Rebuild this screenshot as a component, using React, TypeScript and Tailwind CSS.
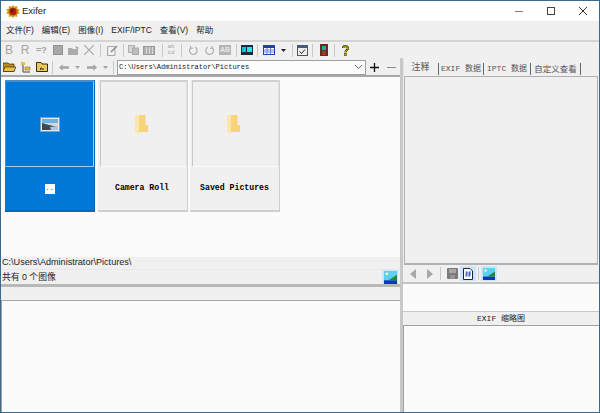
import type { ReactNode } from "react";

const cjk = "font-['Liberation_Sans','Noto_Sans_CJK_SC',sans-serif]";
const mono = "font-['Liberation_Mono','Noto_Sans_CJK_SC',monospace]";

// fixed width cell so that toolbar glyphs land on their button grid
function Slot({ w, children }: { w: string; children?: ReactNode }) {
  return <div className={`${w} shrink-0 flex items-center justify-center`}>{children}</div>;
}

function Sep() {
  return <div className="w-px h-[13px] bg-[#c8c8c8]" />;
}

function Folder() {
  return (
    <svg width="13" height="19" viewBox="0 0 13 19">
      <path d="M4 0H10.5V10H13V17H4Z" fill="#f6d477" />
      <path d="M0 0H4V19L0 17Z" fill="#fbe6ad" />
    </svg>
  );
}

function Landscape({ size = 14 }: { size?: number }) {
  return (
    <svg width={size} height={size} viewBox="0 0 14 14">
      <rect width="14" height="14" fill="#5fd0f5" />
      <circle cx="3" cy="3" r="1.5" fill="#fff3a0" />
      <path d="M0 10H14V14H0Z" fill="#1036c0" />
      <path d="M5 10L14 4V10Z" fill="#1f8a30" />
    </svg>
  );
}

function ToolbarTop() {
  return (
    <div className={`h-[16px] shrink-0 flex items-center text-[#a4a4a4] ${cjk}`}>
      <Slot w="w-[16px]"><span className="text-[12px] leading-none">B</span></Slot>
      <Slot w="w-[16px]"><span className="text-[12px] leading-none">R</span></Slot>
      <Slot w="w-[17px]"><span className="text-[9px] font-bold leading-none">=?</span></Slot>
      <Slot w="w-[15px]"><div className="w-[10px] h-[10px] bg-[#a8a8a8] border border-[#909090]" /></Slot>
      <Slot w="w-[17px]"><svg width="13" height="11" viewBox="0 0 13 11"><path d="M1 3H5L6 4H11V10H1Z" fill="#ababab" /><path d="M8 1L12 3L10 4Z" fill="#909090" /></svg></Slot>
      <Slot w="w-[14px]"><svg width="10" height="10" viewBox="0 0 10 10"><path d="M0 0L10 10M10 0L0 10" stroke="#a8a8a8" strokeWidth="1.2" /></svg></Slot>
      <Slot w="w-[8px]"><Sep /></Slot>
      <Slot w="w-[16px]"><svg width="12" height="11" viewBox="0 0 12 11"><path d="M1.5 1.5H9V10.5H1.5Z" fill="none" stroke="#a8a8a8" /><path d="M5 7L11 1" stroke="#888" strokeWidth="1.5" /></svg></Slot>
      <Slot w="w-[6px]"><Sep /></Slot>
      <Slot w="w-[15px]"><svg width="11" height="10" viewBox="0 0 11 10"><rect x="0.5" y="0.5" width="6" height="7" fill="#d4d4d4" stroke="#b0b0b0" /><rect x="4.5" y="3" width="6" height="6.5" fill="#bcbcbc" stroke="#a8a8a8" /></svg></Slot>
      <Slot w="w-[16px]"><svg width="12" height="9" viewBox="0 0 12 9"><rect x="0.5" y="0.5" width="11" height="8" fill="#b0b0b0" stroke="#989898" /><path d="M3.5 1V8M6.5 1V8M9.5 1V8" stroke="#d8d8d8" /></svg></Slot>
      <Slot w="w-[10px]"><Sep /></Slot>
      <Slot w="w-[8px]"><div className={`text-[6px] leading-[6px] text-center ${mono}`}>ab<br />cd</div></Slot>
      <Slot w="w-[12px]"><Sep /></Slot>
      <Slot w="w-[13px]"><svg width="11" height="11" viewBox="0 0 12 12"><path d="M3 3A4.2 4.2 0 1 0 8 2.5M3 1V3.5H5.5" fill="none" stroke="#a8a8a8" strokeWidth="1.2" /></svg></Slot>
      <Slot w="w-[18px]"><svg width="11" height="11" viewBox="0 0 12 12"><path d="M9 3A4.2 4.2 0 1 1 4 2.5M9 1V3.5H6.5" fill="none" stroke="#a8a8a8" strokeWidth="1.2" /></svg></Slot>
      <Slot w="w-[14px]"><div className="w-[12px] h-[10px] bg-[#b4b4b4] text-[7px] leading-[10px] text-center text-[#e8e8e8] font-bold">AB</div></Slot>
      <Slot w="w-[8px]"><Sep /></Slot>
      <Slot w="w-[14px]"><svg width="12" height="10" viewBox="0 0 12 10"><rect width="12" height="10" fill="#1d2a3a" /><rect x="1" y="2" width="4" height="5" fill="#20c0d0" /><rect x="6" y="2" width="5" height="5" fill="#30e0e8" /></svg></Slot>
      <Slot w="w-[6px]"><Sep /></Slot>
      <Slot w="w-[18px]"><svg width="12" height="10" viewBox="0 0 12 10"><rect width="12" height="10" fill="#1f3fb0" /><path d="M1 3H11V9H1Z" fill="#fff" /><path d="M1 5H11M1 7H11M4 3V9M7.5 3V9" stroke="#5f86d8" /></svg></Slot>
      <Slot w="w-[10px]"><svg width="5" height="3" viewBox="0 0 5 3"><path d="M0 0H5L2.5 3Z" fill="#222" /></svg></Slot>
      <Slot w="w-[8px]"><Sep /></Slot>
      <Slot w="w-[12px]"><svg width="11" height="11" viewBox="0 0 11 11"><rect x="0.5" y="0.5" width="10" height="10" fill="#efefef" stroke="#555" /><rect x="1" y="1" width="9" height="2" fill="#3a5f9a" /><path d="M2.5 6.5L4.5 8.5L8 4.5" fill="none" stroke="#222" /></svg></Slot>
      <Slot w="w-[8px]"><Sep /></Slot>
      <Slot w="w-[15px]"><svg width="8" height="12" viewBox="0 0 8 12"><rect width="8" height="12" fill="#6a2a1e" /><rect x="2" y="2" width="4" height="4" fill="#20a8a8" /><rect x="2.5" y="7" width="3" height="4" fill="#a04030" /></svg></Slot>
      <Slot w="w-[6px]"><Sep /></Slot>
      <Slot w="w-[16px]"><svg width="7" height="11" viewBox="0 0 7 11"><path d="M1 3C1 .6 6 .6 6 3C6 5 3.5 4.8 3.5 7.5" fill="none" stroke="#3a3000" strokeWidth="2.2" /><path d="M1 3C1 .6 6 .6 6 3C6 5 3.5 4.8 3.5 7.5" fill="none" stroke="#e8c800" strokeWidth="1" /><rect x="2.3" y="8.5" width="2.4" height="2.4" fill="#c8a800" stroke="#3a3000" strokeWidth=".5" /></svg></Slot>
    </div>
  );
}

function ToolbarPath() {
  return (
    <div className="h-[17px] shrink-0 flex items-center pt-px">
      <Slot w="w-[16px]"><svg width="13" height="10" viewBox="0 0 13 10"><path d="M0 1H5L6 2H11V9.5H0Z" fill="#b88a28" stroke="#3a2a00" strokeWidth=".7" /><path d="M2 5H13L11 9.5H0Z" fill="#e8c050" stroke="#3a2a00" strokeWidth=".7" /></svg></Slot>
      <Slot w="w-[17px]"><svg width="10" height="11" viewBox="0 0 10 11"><path d="M2 1V10H9" fill="none" stroke="#444" /><rect x="0" y="0" width="4" height="3" fill="#e8c040" /><rect x="4" y="5" width="5" height="3" fill="#e8c040" stroke="#70581a" strokeWidth=".5" /></svg></Slot>
      <Slot w="w-[15px]"><svg width="12" height="10" viewBox="0 0 12 10"><path d="M0.5 0.5H5L6 2H11.5V9.5H0.5Z" fill="#e8c860" stroke="#3a2a00" /><path d="M8 7H4M4 7L5.5 5.5" fill="none" stroke="#222" /></svg></Slot>
      <Slot w="w-[6px]"><Sep /></Slot>
      <Slot w="w-[17px]"><svg width="10" height="7" viewBox="0 0 11 7"><path d="M0 3.5L4 0V2H11V5H4V7Z" fill="#a4a4a4" /></svg></Slot>
      <Slot w="w-[11px]"><svg width="5" height="3" viewBox="0 0 5 3"><path d="M0 0H5L2.5 3Z" fill="#a4a4a4" /></svg></Slot>
      <Slot w="w-[17px]"><svg width="10" height="7" viewBox="0 0 11 7"><path d="M11 3.5L7 0V2H0V5H7V7Z" fill="#a4a4a4" /></svg></Slot>
      <Slot w="w-[11px]"><svg width="5" height="3" viewBox="0 0 5 3"><path d="M0 0H5L2.5 3Z" fill="#a4a4a4" /></svg></Slot>
      <Slot w="w-[4px]"><Sep /></Slot>
      <div className="ml-[2px] w-[249px] h-[15px] shrink-0 border border-[#a0a0a0] bg-[#fcfcfc] flex items-center justify-between pl-px pr-[2px]">
        <span className={`text-[7px] text-[#222] leading-none ${mono}`}>C:\Users\Administrator\Pictures</span>
        <svg width="7" height="4" viewBox="0 0 7 4" className="mr-px"><path d="M0 0L3.5 3.5L7 0" fill="none" stroke="#666" /></svg>
      </div>
      <Slot w="w-[17px]"><svg width="9" height="9" viewBox="0 0 9 9"><path d="M0 4.5H9M4.5 0V9" stroke="#111" strokeWidth="1.3" /></svg></Slot>
      <Slot w="w-[16px]"><div className="w-[9px] h-px bg-[#8a8a8a]" /></Slot>
    </div>
  );
}

function Thumb({ label, selected }: { label: string; selected?: boolean }) {
  return (
    <div className={`w-[90px] h-[132px] shrink-0 flex flex-col border-b-2 border-r ${selected ? "bg-[#0078d7] border-[#0068bd]" : "bg-[#f0f0f0] border-[#cfcfcf]"}`}>
      {selected ? (
        <div className="h-[87px] shrink-0 flex items-center justify-center border-t-2 border-l border-r border-b border-t-[#4a8cc8] border-l-[#4a8cc8] border-r-[#a0ccf0] border-b-[#a0ccf0]">
          <div className="w-[20px] h-[15px] bg-[#e8e8e8] border border-[#6fa0d0] p-px">
            <svg viewBox="0 0 16 11" className="w-full h-full" preserveAspectRatio="none"><rect width="16" height="4" fill="#6db2e0" /><rect y="4" width="16" height="3" fill="#c8dce8" /><path d="M0 4L7 6L16 8V11H0Z" fill="#3f4a50" /><path d="M8 8L16 7V11H9Z" fill="#a8c8e0" /></svg>
          </div>
        </div>
      ) : (
        <div className="h-[87px] shrink-0 ml-[2px] pr-[4px] flex items-center justify-center border-t-2 border-l border-r border-b border-t-[#d0d0d0] border-l-[#c8c8c8] border-r-[#e2e2e2] border-b-[#fafafa]">
          <Folder />
        </div>
      )}
      <div className="flex-1 flex items-center justify-center">
        {selected ? (
          <div className={`w-[10px] h-[10px] bg-white text-[#0078d7] text-[7px] leading-[8px] font-bold text-center ${mono}`}>..</div>
        ) : (
          <span className={`text-[8.2px] font-bold text-black leading-none ${mono}`}>{label}</span>
        )}
      </div>
    </div>
  );
}

function RightTabs() {
  return (
    <div className="h-[18px] shrink-0 flex items-end text-[#555]">
      <div className={`w-[35px] h-[17px] flex items-center justify-center pr-[1px] text-[9px] text-[#555] border-l border-[#e4e4e4] ${cjk}`}>注释</div>
      <div className="w-px h-[12px] bg-[#666] mb-px" />
      <div className={`w-[44px] h-[14px] flex items-center justify-center whitespace-nowrap text-[8px] ${mono}`}>EXIF 数据</div>
      <div className="w-px h-[12px] bg-[#666] mb-px" />
      <div className={`w-[46px] h-[14px] flex items-center justify-center whitespace-nowrap text-[8px] ${mono}`}>IPTC 数据</div>
      <div className="w-px h-[12px] bg-[#666] mb-px" />
      <div className={`w-[49px] h-[14px] flex items-center justify-center whitespace-nowrap text-[8.5px] ${cjk}`}>自定义查看</div>
      <div className="w-px h-[12px] bg-[#666] mb-px" />
    </div>
  );
}

function NavBar() {
  return (
    <div className="h-[17px] shrink-0 flex items-center pl-[7px]">
      <svg width="6" height="10" viewBox="0 0 6 10" className="mr-[11px]"><path d="M6 0V10L0 5Z" fill="#a8a8a8" /></svg>
      <svg width="6" height="10" viewBox="0 0 6 10"><path d="M0 0V10L6 5Z" fill="#a8a8a8" /></svg>
      <div className="w-px h-[13px] bg-[#c8c8c8] ml-[7px] mr-[6px]" />
      <svg width="11" height="11" viewBox="0 0 11 11" className="mr-[2px]"><rect width="11" height="11" rx="1" fill="#7a7a7a" /><rect x="2" y="1" width="7" height="4" fill="#a8a8a8" /><rect x="3" y="7" width="5" height="4" fill="#949494" /></svg>
      <div className="w-[16px] h-[15px] bg-[#cce4f7] flex items-center justify-center">
        <svg width="10" height="12" viewBox="0 0 10 12"><path d="M.5.5H7L9.5 3V11.5H.5Z" fill="#fff" stroke="#223" /><path d="M4 3L3 9M7 3L6 9M2.5 5H8M2.5 7H8" stroke="#1a3fb0" strokeWidth=".8" /></svg>
      </div>
      <div className="w-px h-[13px] bg-[#c8c8c8] mx-[2px]" />
      <div className="w-[16px] h-[15px] bg-[#cce4f7] flex items-center justify-center"><Landscape size={12} /></div>
    </div>
  );
}

export default function App() {
  return (
    <div className={`w-[600px] h-[413px] overflow-hidden bg-[#f0f0f0] border border-[#3b6b8c] flex flex-col ${cjk}`}>
      {/* Title bar */}
      <div className="h-[20px] shrink-0 bg-white flex items-center">
        <svg width="14" height="13" viewBox="0 0 15 14" className="ml-[5px]">
          <path d="M7.5 0L9 2L12 1L12 4L15 5L13 7L15 9L12 10L12 13L9 12L7.5 14L6 12L3 13L3 10L0 9L2 7L0 5L3 4L3 1L6 2Z" fill="#d09a10" />
          <circle cx="7.5" cy="7" r="4" fill="#b02010" />
          <circle cx="6.5" cy="6" r="1.5" fill="#502010" />
        </svg>
        <span className="ml-[2px] text-[9.5px] text-[#222]">Exifer</span>
        <div className="ml-auto flex items-center">
          <div className="w-[8px] h-px bg-[#777] mr-[24px]" />
          <div className="w-[8px] h-[8px] border border-[#444] mr-[24px]" />
          <svg width="8" height="8" viewBox="0 0 8 8" className="mr-[12px]"><path d="M0 0L8 8M8 0L0 8" stroke="#333" strokeWidth="1" /></svg>
        </div>
      </div>
      {/* Menu */}
      <div className="h-[19px] shrink-0 flex items-center pl-[5px] gap-[8px] text-[8.5px] text-[#222] whitespace-nowrap">
        <span>文件(F)</span>
        <span>编辑(E)</span>
        <span>图像(I)</span>
        <span>EXIF/IPTC</span>
        <span>查看(V)</span>
        <span>帮助</span>
      </div>
      <div className="h-[2px] shrink-0 bg-[#d4d4d4]" />
      <ToolbarTop />
      <div className="flex-1 flex min-h-0">
        {/* Left pane */}
        <div className="w-[399px] shrink-0 flex flex-col">
          <ToolbarPath />
          <div className="h-[182px] shrink-0 bg-[#fbfbfb] border-t-2 border-[#a8a8a8] pl-[4px] pt-[3px] flex gap-[2.5px] items-start">
            <Thumb label=".." selected />
            <Thumb label="Camera Roll" />
            <Thumb label="Saved Pictures" />
          </div>
          <div className="h-[12px] shrink-0 flex items-center pl-px text-[9.1px] text-[#222] leading-none">C:\Users\Administrator\Pictures\</div>
          <div className="h-[15px] shrink-0 flex items-center pl-px text-[8.8px] text-[#222] leading-none border-t border-[#e8e8e8]">
            <span>共有 0 个图像</span>
            <div className="ml-auto mr-[2px] w-[16px] h-[14px] bg-[#cce4f7] flex items-center justify-center"><Landscape size={13} /></div>
          </div>
          <div className="h-[3px] shrink-0 bg-[#b8b8b8]" />
          <div className="h-[14px] shrink-0 bg-[#f0f0f0] border-b border-[#a8a8a8]" />
          <div className="flex-1 bg-[#fbfbfb] border-l border-[#a0a0a0]" />
        </div>
        {/* Splitter */}
        <div className="w-[3px] shrink-0 bg-[#c8c8c8]" />
        {/* Right pane */}
        <div className="flex-1 flex flex-col min-w-0">
          <RightTabs />
          <div className="h-[189px] shrink-0 bg-[#f0f0f0] ml-px mr-px border-l border-t border-r border-b-2 border-[#b0b0b0]" />
          <NavBar />
          <div className="h-[2px] shrink-0 bg-[#c4c4c4]" />
          <div className="h-[28px] shrink-0 bg-[#fbfbfb] border-b border-[#c8c8c8]" />
          <div className={`h-[13px] shrink-0 flex items-center justify-center whitespace-nowrap text-[8px] text-[#222] ${mono}`}>EXIF 缩略图</div>
          <div className="flex-1 bg-[#fbfbfb] border-l border-t border-[#a0a0a0]" />
        </div>
      </div>
    </div>
  );
}
